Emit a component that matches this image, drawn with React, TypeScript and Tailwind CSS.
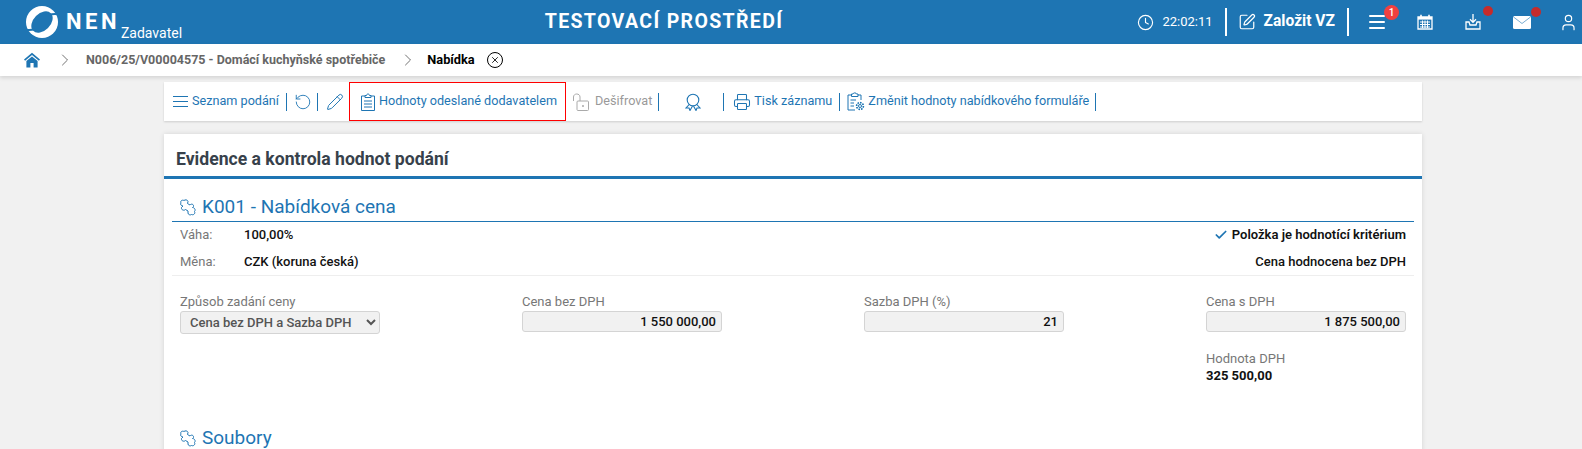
import React from "react";
import { ChevronRight, Clock, SquarePen, Check, RotateCcw, Pencil, Printer, User, X } from "lucide-react";

const Sep = ({ className = "" }: { className?: string }) => <span className={"inline-block w-px h-[18px] bg-[#1e75b3] shrink-0 " + className} />;
const WSep = ({ className = "" }: { className?: string }) => <span className={"w-[2px] h-7 bg-white shrink-0 " + className} />;

function Logo() {
  return (
    <svg viewBox="0 0 32 32" className="w-8 h-8 shrink-0">
      <circle cx="16" cy="16" r="16" fill="#fff" />
      <ellipse cx="16" cy="16" rx="12.5" ry="8.5" transform="rotate(-45 16 16)" fill="#1e75b3" />
      <path d="M23 9 C26 8 29 7.5 33 8.5" stroke="#1e75b3" strokeWidth="2" fill="none" />
      <path d="M9 23 C6 24 3 24.5 -1 23.5" stroke="#1e75b3" strokeWidth="2" fill="none" />
    </svg>
  );
}

function PuzzleIcon() {
  return (
    <svg viewBox="0 0 16 17" className="mr-[6px] h-[17px] w-[16px] shrink-0" fill="none" stroke="#1e75b3" strokeWidth="1" strokeLinejoin="round">
      <path d="M1 4 C0 2 2 .5 4 1.5 C5 .5 7.5 .5 8 2.5 L7.5 4.5 L10 6 C11 4.5 14 5 13.5 7.5 L12.5 8.5 C14.5 8.5 16 11 14.5 12.5 C15.5 14 14 16.5 11.5 15.5 C10 16.5 8 15.5 8 14 L8 12 L5.5 10.5 C4 12 1 11 1.5 8.5 L3 7 C1 7 0 5 1 4 Z" />
    </svg>
  );
}

function Heading({ children }: { children: React.ReactNode }) {
  return (
    <div className="flex items-center text-[19px] leading-6 text-[#1e75b3]">
      <PuzzleIcon />
      {children}
    </div>
  );
}

function Field({ label, value }: { label: string; value: string }) {
  return (
    <div className="w-[200px]">
      <div className="text-[13px] leading-[17px] text-[#777]">{label}</div>
      <div className="mt-[1px] h-[21px] rounded-[3px] border border-[#d4d4d4] bg-[#f1f1f1] px-[5px] text-right text-[13px] leading-[19px] font-medium text-[#111]">{value}</div>
    </div>
  );
}

function HomeIcon() {
  return (
    <svg viewBox="0 0 16 16" className="ml-[24px] h-[16px] w-[16px] shrink-0" fill="#1e75b3">
      <path d="M8 .8 L16 7.6 L14.9 8.8 L8 3 L1.1 8.8 L0 7.6 Z" />
      <path d="M8 4.4 L13.6 9 V15.6 H9.6 V11 H6.4 V15.6 H2.4 V9 Z" />
    </svg>
  );
}

export default function App() {
  return (
    <div className="h-[449px] overflow-hidden bg-[#f1f1f1] font-['Roboto',sans-serif]">
      <header className="flex h-[44px] items-center bg-[#1e75b3] text-white">
        <div className="ml-[26px] flex w-[156px] shrink-0 items-center">
          <Logo />
          <span className="ml-[8px] text-[22px] font-bold leading-none tracking-[3.5px]">NEN</span>
          <span className="ml-[1px] mt-[21px] text-[14px] leading-4">Zadavatel</span>
        </div>
        <div className="ml-[362px] w-[240px] shrink-0 whitespace-nowrap text-center text-[19.5px] font-bold tracking-[1.35px]">TESTOVACÍ PROSTŘEDÍ</div>
        <div className="ml-auto flex items-center">
          <Clock size={17} strokeWidth={1.6} />
          <span className="ml-[8px] text-[13px]">22:02:11</span>
          <WSep className="ml-[12px]" />
          <SquarePen size={18} strokeWidth={1.6} className="ml-[11px]" />
          <span className="ml-[8px] text-[15.6px] font-bold">Založit VZ</span>
          <WSep className="ml-[12px]" />
          <span className="relative ml-[20px]">
            <svg viewBox="0 0 16 14" className="h-[14px] w-[16px]" fill="#fff"><rect y="0" width="16" height="2" rx="1" /><rect y="6" width="16" height="2" rx="1" /><rect y="12" width="16" height="2" rx="1" /></svg>
            <span className="absolute -right-[14px] -top-[10px] flex h-[15px] w-[15px] items-center justify-center rounded-full bg-[#f04040] text-[10px] font-medium">1</span>
          </span>
          <svg viewBox="0 0 16 16" className="ml-[32px] h-[16px] w-[16px]" fill="none" stroke="#fff">
            <path d="M1 3 H15 V15 H1 Z" strokeWidth="1.3" />
            <path d="M4 .8 V3.4 M12 .8 V3.4" strokeWidth="1.6" />
            <rect x="1" y="3" width="14" height="2.6" fill="#fff" strokeWidth="0" />
            <path d="M3 8 H13 M3 10.5 H13 M3 13 H13 M5.5 6.5 V14 M8 6.5 V14 M10.5 6.5 V14" strokeWidth="1" />
          </svg>
          <span className="relative ml-[32px]">
            <svg viewBox="0 0 16 16" className="h-[16px] w-[16px]" fill="none" stroke="#fff" strokeWidth="1.3">
              <path d="M8 0 V8 M5 5.2 L8 8.4 L11 5.2" />
              <path d="M4 8 H1 V15 H15 V8 H12 L11 11 H5 Z" />
            </svg>
            <span className="absolute -right-[12px] -top-[8px] h-[10px] w-[10px] rounded-full bg-[#c62b2b]" />
          </span>
          <span className="relative ml-[32px]">
            <svg viewBox="0 0 18 13" className="block h-[13px] w-[18px]">
              <rect width="18" height="13" rx="1.5" fill="#fff" />
              <path d="M.5 1 L9 7.5 L17.5 1" fill="none" stroke="#1e75b3" strokeWidth="1" opacity="0.6" />
            </svg>
            <span className="absolute -right-[10px] -top-[9px] h-[10px] w-[10px] rounded-full bg-[#c62b2b]" />
          </span>
          <User size={19} strokeWidth={1.5} className="ml-[28px] mr-[4px]" />
        </div>
      </header>

      <nav className="flex h-[32px] items-center bg-white text-[12.5px] font-bold shadow-[0_2px_4px_rgba(0,0,0,0.12)]">
        <HomeIcon />
        <ChevronRight size={20} strokeWidth={1} className="ml-[15px] text-[#555]" />
        <span className="ml-[11px] text-[#666]">N006/25/V00004575 - Domácí kuchyňské spotřebiče</span>
        <ChevronRight size={20} strokeWidth={1} className="ml-[13px] text-[#555]" />
        <span className="ml-[9px] text-[12.8px] text-black">Nabídka</span>
        <span className="ml-[12px] flex h-4 w-4 items-center justify-center rounded-full border border-black">
          <X size={10} strokeWidth={2} />
        </span>
      </nav>

      <div className="ml-[164px] mt-[6px] flex h-[39px] w-[1258px] items-center bg-white text-[12.65px] text-[#1e75b3] shadow-[0_1px_2px_rgba(0,0,0,0.15)]">
        <svg viewBox="0 0 15 11" className="ml-[9px] h-[11px] w-[15px] shrink-0" stroke="#1e75b3" strokeWidth="1"><path d="M0 .5 H15 M0 5.5 H15 M0 10.5 H15" /></svg>
        <span className="ml-[4px]">Seznam podání</span>
        <Sep className="ml-[7px]" />
        <RotateCcw size={18} strokeWidth={1.2} className="ml-[7px]" />
        <Sep className="ml-[5px]" />
        <Pencil size={18} strokeWidth={1.3} className="ml-[8px]" />
        <div className="ml-[5px] flex h-[39px] w-[217px] items-center border border-[#ff0000] pl-[10px]">
          <svg viewBox="0 0 16 18" className="h-[18px] w-[16px] shrink-0" fill="none" stroke="#1e75b3" strokeWidth="1">
            <path d="M5 3 H1.5 V17.5 H14.5 V3 H11" />
            <path d="M5 4.5 V2.5 H6.5 C6.5 .5 9.5 .5 9.5 2.5 H11 V4.5 Z" />
            <path d="M4 8 H12 M4 11 H12 M4 14 H12" />
          </svg>
          <span className="ml-[3px] whitespace-nowrap">Hodnoty odeslané dodavatelem</span>
        </div>
        <svg viewBox="0 0 16 18" className="ml-[7px] h-[18px] w-[16px] shrink-0" fill="none" stroke="#aaa" strokeWidth="1">
          <rect x="4" y="8" width="11.5" height="9.5" rx="1" />
          <path d="M.5 8 V4 C.5 0 7 0 7 4 V8" />
          <circle cx="10" cy="13" r=".6" fill="#aaa" />
        </svg>
        <span className="ml-[6px] text-[#999]">Dešifrovat</span>
        <Sep className="ml-[6px]" />
        <svg viewBox="0 0 16 18" className="ml-[26px] h-[18px] w-[16px] shrink-0" fill="none" stroke="#1e75b3" strokeWidth="1.1">
          <circle cx="8" cy="7" r="5.8" />
          <path d="M4.2 11.5 L1 15 L4 15 L5 17.5 L7.5 13 M11.8 11.5 L15 15 L12 15 L11 17.5 L8.5 13" />
        </svg>
        <Sep className="ml-[22px]" />
        <Printer size={18} strokeWidth={1.4} className="ml-[9px]" />
        <span className="ml-[3px]">Tisk záznamu</span>
        <Sep className="ml-[7px]" />
        <svg viewBox="0 0 18 19" className="ml-[7px] h-[19px] w-[18px] shrink-0" fill="none" stroke="#1e75b3" strokeWidth="1">
          <path d="M8 18 H1 V3 H4.5 M11 3 H14 V8" />
          <path d="M4.5 4.5 V2 H6 C6 .5 9.5 .5 9.5 2 H11 V4.5 Z" />
          <path d="M3.5 8 H9 M3.5 11 H7 M3.5 14 H7" />
          <circle cx="13" cy="14" r="1.5" />
          <circle cx="13" cy="14" r="3.4" strokeWidth="1.6" strokeDasharray="1.6 1" />
        </svg>
        <span className="ml-[3px] whitespace-nowrap">Změnit hodnoty nabídkového formuláře</span>
        <Sep className="ml-[6px]" />
      </div>

      <main className="ml-[164px] mt-[13px] h-[400px] w-[1258px] bg-white shadow-[0_0_5px_rgba(0,0,0,0.12)]">
        <h1 className="flex h-[45px] items-end border-b-[3px] border-[#1e75b3] pb-[7px] pl-[12px] text-[17.6px] font-bold leading-5 text-[#37414b]">Evidence a kontrola hodnot podání</h1>
        <div className="px-[8px] pt-[16px]">
          <div className="border-b border-[#1e75b3] pb-[2px] pl-[8px]"><Heading>K001 - Nabídková cena</Heading></div>
          <div className="border-b border-[#eee] px-[8px] pb-[5px] pt-[4px] text-[13px] font-medium leading-[17px] text-[#111]">
            <div className="flex items-center justify-between">
              <div className="flex"><span className="w-[64px] font-normal text-[#777]">Váha:</span>100,00%</div>
              <div className="flex items-center font-semibold"><Check size={14} strokeWidth={3} className="mr-[4px] text-[#1e75b3]" />Položka je hodnotící kritérium</div>
            </div>
            <div className="mt-[10px] flex items-center justify-between">
              <div className="flex"><span className="w-[64px] font-normal text-[#777]">Měna:</span>CZK (koruna česká)</div>
              <div>Cena hodnocena bez DPH</div>
            </div>
          </div>
          <div className="flex justify-between px-[8px] pt-[17px]">
            <div className="w-[200px]">
              <div className="text-[13px] leading-[17px] text-[#777]">Způsob zadání ceny</div>
              <select defaultValue="a" className="mt-[1px] h-[23px] w-[200px] rounded-[3px] border border-[#d4d4d4] bg-[#f1f1f1] pl-[5px] text-[13px] font-medium text-[#555]">
                <option value="a">Cena bez DPH a Sazba DPH</option>
              </select>
            </div>
            <Field label="Cena bez DPH" value="1 550 000,00" />
            <Field label="Sazba DPH (%)" value="21" />
            <div className="w-[200px]">
              <Field label="Cena s DPH" value="1 875 500,00" />
              <div className="mt-[18px] text-[13px] leading-[17px] text-[#777]">Hodnota DPH</div>
              <div className="text-[13px] font-bold leading-[17px] text-[#111]">325 500,00</div>
            </div>
          </div>
          <div className="mt-[42px] pl-[8px]"><Heading>Soubory</Heading></div>
        </div>
      </main>
    </div>
  );
}
